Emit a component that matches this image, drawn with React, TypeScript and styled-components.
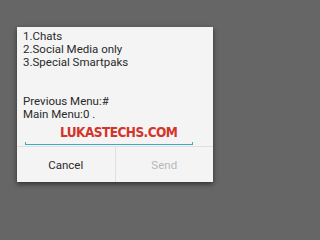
import React from 'react'
import styled, { createGlobalStyle } from 'styled-components'

const GlobalStyle = createGlobalStyle`
  html, body {
    margin: 0;
    padding: 0;
    background: #666666;
  }
  body {
    font-family: Roboto, 'Liberation Sans', sans-serif;
  }
`

const Screen = styled.div`
  width: 230px;
  height: 219px;
  box-sizing: border-box;
  padding-top: 27px;
  display: flex;
  justify-content: center;
  align-items: flex-start;
`

const Dialog = styled.div`
  width: 196px;
  height: 155px;
  background: #f4f4f4;
  box-shadow: 0 2px 5px rgba(0, 0, 0, 0.55);
  display: flex;
  flex-direction: column;
`

const Body = styled.div`
  flex: 1;
  padding: 2.5px 6px 0 6px;
  display: flex;
  flex-direction: column;
  position: relative;
`

const Message = styled.div`
  font-size: 11.5px;
  line-height: 13px;
  color: #2a2a2a;
  white-space: pre;
`

const Line = styled.div`
  height: 13px;
`

const Field = styled.div`
  margin: auto 14px 1px 2px;
  height: 2px;
  border: 1px solid #38acc9;
  border-top: none;
  border-bottom-width: 1.5px;
`

/* watermark stamped over the empty input */
const Watermark = styled.div`
  position: absolute;
  left: 43px;
  top: 97px;
  white-space: nowrap;
  font-family: 'DejaVu Sans Condensed', 'DejaVu Sans', sans-serif;
  font-weight: bold;
  font-size: 13.5px;
  letter-spacing: -0.55px;
  color: #d3352b;
`

const Buttons = styled.div`
  height: 35px;
  display: flex;
  border-top: 1px solid #e0e0e0;
`

const Action = styled.div<{ $disabled?: boolean }>`
  flex: 1;
  display: flex;
  align-items: center;
  justify-content: center;
  font-size: 11.5px;
  padding-top: 1px;
  color: ${p => (p.$disabled ? '#b8b8b8' : '#2a2a2a')};
  & + & {
    border-left: 1px solid #e0e0e0;
  }
`

const lines = [
  '1.Chats',
  '2.Social Media only',
  '3.Special Smartpaks',
  '',
  '',
  'Previous Menu:#',
  'Main Menu:0 .',
]

const App: React.FC = () => {
  return (
    <>
      <GlobalStyle />
      <Screen>
        <Dialog>
          <Body>
            <Message>
              {lines.map((l, i) => (
                <Line key={i}>{l}</Line>
              ))}
            </Message>
            <Field />
            <Watermark>LUKASTECHS.COM</Watermark>
          </Body>
          <Buttons>
            <Action>Cancel</Action>
            <Action $disabled>Send</Action>
          </Buttons>
        </Dialog>
      </Screen>
    </>
  )
}

export default App
